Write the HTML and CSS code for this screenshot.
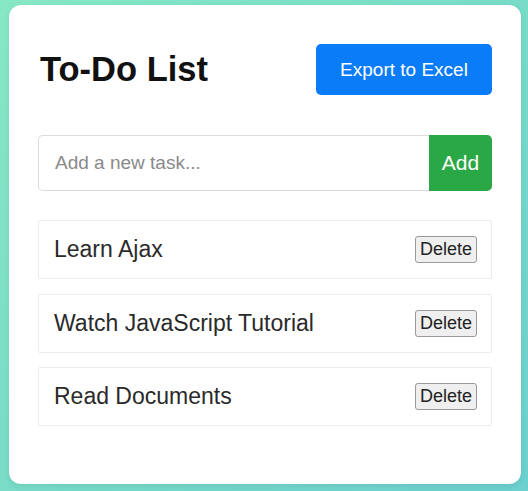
FILE: index.html
```html
<!DOCTYPE html>
<html>
<head>
<meta charset="utf-8">
<link rel="stylesheet" href="styles.css">
</head>
<body>
<div class="card">
  <div class="header">
    <h1 class="title">To-Do List</h1>
    <button class="export">Export to Excel</button>
  </div>
  <div class="add-row">
    <input class="task-input" type="text" placeholder="Add a new task...">
    <button class="add">Add</button>
  </div>
  <ul class="list">
    <li class="item"><span class="item-text">Learn Ajax</span><button class="delete">Delete</button></li>
    <li class="item"><span class="item-text">Watch JavaScript Tutorial</span><button class="delete">Delete</button></li>
    <li class="item"><span class="item-text">Read Documents</span><button class="delete">Delete</button></li>
  </ul>
</div>
</body>
</html>
```
FILE: styles.css
```css
html, body {
  margin: 0;
  padding: 0;
}
body {
  width: 528px;
  height: 491px;
  background: linear-gradient(135deg, #86e8c4 0%, #78dcc8 50%, #6cd0cf 100%);
  font-family: "Liberation Sans", Arial, sans-serif;
  overflow: hidden;
  box-sizing: border-box;
  padding: 5px 0 0 9px;
}
.card {
  width: 512px;
  height: 479px;
  box-sizing: border-box;
  background: #fff;
  border-radius: 12px;
  padding: 39px 29px 0 29px;
  box-shadow: 0 2px 6px rgba(0,0,0,0.08);
}
.header {
  display: flex;
  align-items: center;
  justify-content: space-between;
  height: 51px;
}
.title {
  margin: 0;
  font-size: 34.5px;
  font-weight: bold;
  color: #111;
  padding-left: 2px;
}
.export {
  width: 176px;
  height: 51px;
  background: #0a7cf8;
  color: #fff;
  border: none;
  border-radius: 5px;
  font-family: inherit;
  font-size: 19px;
}
.add-row {
  display: flex;
  margin-top: 40px;
  height: 56px;
}
.task-input {
  flex: 1;
  box-sizing: border-box;
  height: 56px;
  border: 1px solid #dcdcdc;
  border-right: none;
  border-radius: 5px 0 0 5px;
  padding: 0 16px;
  font-family: inherit;
  font-size: 19px;
  outline: none;
}
.task-input::placeholder {
  color: #8a8a8a;
}
.add {
  width: 63px;
  height: 56px;
  background: #2aa845;
  color: #fff;
  border: none;
  border-radius: 0 5px 5px 0;
  font-family: inherit;
  font-size: 21px;
}
.list {
  list-style: none;
  margin: 29px 0 0 0;
  padding: 0;
  display: flex;
  flex-direction: column;
  gap: 14.5px;
}
.item {
  height: 59px;
  box-sizing: border-box;
  border: 1px solid #ececec;
  border-radius: 2px;
  display: flex;
  align-items: center;
  justify-content: space-between;
  padding: 0 14px 0 15px;
}
.item-text {
  font-size: 23px;
  color: #2a2a2a;
}
.delete {
  font-family: inherit;
  font-size: 18px;
  color: #222;
  background: #efefef;
  border: 1px solid #9a9a9a;
  border-radius: 3px;
  padding: 1px 2px;
  height: 27px;
  width: 62px;
}
```
